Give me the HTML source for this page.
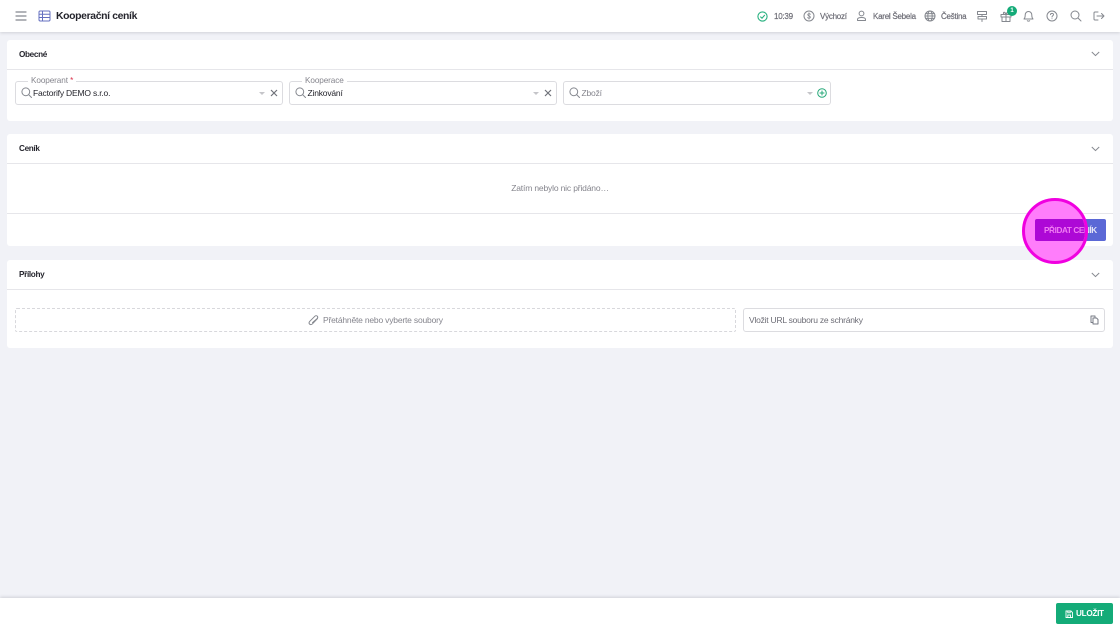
<!DOCTYPE html>
<html lang="cs"><head><meta charset="utf-8"><title>Kooperační ceník</title>
<style>
*{box-sizing:border-box}
html,body{margin:0;padding:0}
body{width:1120px;height:630px;position:relative;overflow:hidden;background:#f1f2f7;font-family:"Liberation Sans",sans-serif;color:#23232b}
.a{position:absolute}
.t{position:absolute;white-space:nowrap;line-height:14px}
.card{position:absolute;left:7px;width:1106px;background:#fff;border-radius:3px}
.line{position:absolute;left:0;right:0;height:1px;background:#e6e6ea}
.head{position:absolute;left:12px;font-size:8.2px;letter-spacing:-.35px;font-weight:bold;color:#26262e;line-height:12px}
.field{position:absolute;top:81px;height:24px;background:#fff;border:1px solid #dcdce0;border-radius:3px}
.lab{position:absolute;top:76px;font-size:8.2px;letter-spacing:-.1px;color:#85858d;background:#fff;padding:0 3px;line-height:10px}
svg{position:absolute;fill:none;overflow:visible}
.top{font-size:8px;letter-spacing:-.25px;color:#6d6d76;-webkit-text-stroke:.2px #6d6d76}
.ic{stroke:#85888f;stroke-width:1;stroke-linecap:round;stroke-linejoin:round}
.btxt{font-size:8.2px;letter-spacing:-.4px;font-weight:bold}
.b85{font-size:8.5px;letter-spacing:-.19px}
</style></head><body>

<div class="a" style="left:0;top:0;width:1120px;height:32px;background:#fff;box-shadow:0 1px 3px rgba(60,60,80,.18)"></div>
<svg style="left:15px;top:11px" width="12" height="10" class="ic"><path d="M1 1H11M1 5H11M1 9H11" stroke-width="1.2"/></svg>
<svg style="left:38px;top:10px" width="13" height="12" stroke="#6570c0" stroke-width="1"><rect x="1" y="1" width="11" height="10" rx="1.2"/><path d="M1 4.2H12M1 7.5H12M4.5 1V11"/></svg>
<div class="t" style="left:56px;top:10px;font-size:10.4px;letter-spacing:-.35px;font-weight:bold;color:#24242c">Kooperační ceník</div>

<svg style="left:757px;top:11px" width="11" height="11" stroke="#25b07e" stroke-width="1.1"><circle cx="5.5" cy="5.5" r="4.6"/><path d="M3.3 5.6L5 7.2L7.8 4"/></svg>
<div class="t top" style="left:774px;top:9.500px">10:39</div>
<svg style="left:803px;top:10px" width="12" height="12" class="ic"><circle cx="6" cy="6" r="5"/><path d="M7.500 4.300C7 3.500 5 3.400 4.700 4.600C4.500 6 7.600 5.800 7.400 7.400C7.100 8.600 5 8.500 4.500 7.600M6 2.800V9.200" stroke-width=".8"/></svg>
<div class="t top" style="left:820px;top:9.500px">Výchozí</div>
<svg style="left:856px;top:10px" width="11" height="12" class="ic" stroke-width=".9"><circle cx="5.500" cy="3.500" r="2.400"/><path d="M1.500 10.500V9.500C1.500 8 3 7.500 5.500 7.500S9.500 8 9.500 9.500V10.500Z"/></svg>
<div class="t top" style="left:873px;top:9.500px">Karel Šebela</div>
<svg style="left:924px;top:10px" width="12" height="12" class="ic" stroke-width=".9"><circle cx="6" cy="6" r="5"/><ellipse cx="6" cy="6" rx="2.200" ry="5"/><path d="M1 6H11M1.600 3.600H10.400M1.600 8.400H10.400"/></svg>
<div class="t top" style="left:941px;top:9.500px">Čeština</div>
<svg style="left:976px;top:10px" width="12" height="12" class="ic" stroke-width=".9"><path d="M1.500 1.500H10.500V4.500H1.500ZM2 6.500H10.500V9H2ZM6 4.500V6.500M6 9V11.500"/></svg>
<svg style="left:1000px;top:11px" width="12" height="11" class="ic" stroke-width=".9"><path d="M1 3.500H11V6H1ZM2 6V10.500H10V6M6 3.500V10.500M6 3.500C4 3.500 3 2.800 3.500 1.600C4.200.6 5.500 1.500 6 3.500C6.500 1.500 7.800.6 8.500 1.600C9 2.800 8 3.500 6 3.500"/></svg>
<div class="a" style="left:1007px;top:6px;width:10px;height:10px;border-radius:50%;background:#14ab78;color:#fff;font-size:6px;font-weight:bold;text-align:center;line-height:10px">1</div>
<svg style="left:1023px;top:10px" width="11" height="12" class="ic"><path d="M1 9H10C9 8 8.800 7 8.800 5C8.800 3 7.400 1.500 5.500 1.500S2.200 3 2.200 5C2.200 7 2 8 1 9ZM4.300 10.700C4.800 11.300 6.200 11.300 6.700 10.700"/></svg>
<svg style="left:1046px;top:10px" width="12" height="12" class="ic"><circle cx="6" cy="6" r="5"/><path d="M4.500 4.600C4.600 2.900 7.500 2.900 7.500 4.600C7.500 5.800 6 5.700 6 7M6 8.700V8.800"/></svg>
<svg style="left:1070px;top:10px" width="12" height="12" class="ic"><circle cx="5" cy="5" r="4"/><path d="M8 8L11 11"/></svg>
<svg style="left:1093px;top:11px" width="12" height="10" class="ic"><path d="M5 1H2C1.400 1 1 1.400 1 2V8C1 8.600 1.400 9 2 9H5M4 5H11M8.500 2.500L11 5L8.500 7.500"/></svg>

<div class="card" style="top:40px;height:81px">
 <div class="head" style="top:9px">Obecné</div><div class="line" style="top:29px"></div>
</div>
<svg style="left:1091px;top:51px" width="9" height="6" stroke="#85888f" stroke-width="1"><path d="M.8 1L4.500 4.600L8.200 1"/></svg>

<div class="field" style="left:15px;width:268px"></div>
<div class="lab" style="left:28px">Kooperant <span style="color:#d9304a">*</span></div>
<svg style="left:21px;top:87px" width="11" height="11" class="ic"><circle cx="4.800" cy="4.800" r="3.900"/><path d="M7.700 7.700L10.500 10.500"/></svg>
<div class="t b85" style="left:33px;top:86px;color:#24242c">Factorify DEMO s.r.o.</div>
<div class="a" style="left:259px;top:92px;border:3px solid transparent;border-top:3px solid #c5c5c9;border-bottom:0"></div>
<svg style="left:270px;top:89px" width="8" height="8" stroke="#6f727a" stroke-width="1.200"><path d="M1 1L7 7M7 1L1 7"/></svg>

<div class="field" style="left:289px;width:268px"></div>
<div class="lab" style="left:302px">Kooperace</div>
<svg style="left:295px;top:87px" width="11" height="11" class="ic"><circle cx="4.800" cy="4.800" r="3.900"/><path d="M7.700 7.700L10.500 10.500"/></svg>
<div class="t b85" style="left:307.500px;top:86px;color:#24242c">Zinkování</div>
<div class="a" style="left:533px;top:92px;border:3px solid transparent;border-top:3px solid #c5c5c9;border-bottom:0"></div>
<svg style="left:544px;top:89px" width="8" height="8" stroke="#6f727a" stroke-width="1.200"><path d="M1 1L7 7M7 1L1 7"/></svg>

<div class="field" style="left:563px;width:268px"></div>
<svg style="left:569px;top:87px" width="11" height="11" class="ic"><circle cx="4.800" cy="4.800" r="3.900"/><path d="M7.700 7.700L10.500 10.500"/></svg>
<div class="t b85" style="left:581.500px;top:86px;color:#85858d">Zboží</div>
<div class="a" style="left:807px;top:92px;border:3px solid transparent;border-top:3px solid #c5c5c9;border-bottom:0"></div>
<svg style="left:817px;top:88px" width="10" height="10" stroke="#25a878" stroke-width="1"><circle cx="5" cy="5" r="4.300"/><path d="M5 2.600V7.400M2.600 5H7.400"/></svg>

<div class="card" style="top:134px;height:112px">
 <div class="head" style="top:9px">Ceník</div><div class="line" style="top:29px"></div><div class="line" style="top:79px"></div>
</div>
<svg style="left:1091px;top:146px" width="9" height="6" stroke="#85888f" stroke-width="1"><path d="M.8 1L4.500 4.600L8.200 1"/></svg>
<div class="t b85" style="left:0;width:1120px;text-align:center;top:181px;letter-spacing:-.16px;color:#85858d">Zatím nebylo nic přidáno…</div>

<div class="card" style="top:260px;height:88px">
 <div class="head" style="top:9px">Přílohy</div><div class="line" style="top:29px"></div>
</div>
<svg style="left:1091px;top:272px" width="9" height="6" stroke="#85888f" stroke-width="1"><path d="M.8 1L4.500 4.600L8.200 1"/></svg>
<div class="a" style="left:15px;top:308px;width:721px;height:24px;border:1px dashed #d8d8dc;border-radius:2px"></div>
<svg style="left:308px;top:315px" width="11" height="11" class="ic" stroke-width="1"><path d="M9.500 3.500L4.500 8.800C3.500 9.800 2.200 9.800 1.500 9C.8 8.200 1 7.200 1.800 6.300L6.800 1.300C7.600.5 8.700.6 9.300 1.200C9.900 1.900 9.800 2.900 9.100 3.600L4.500 7.600"/></svg>
<div class="t b85" style="left:323px;top:313px;color:#85858d">Přetáhněte nebo vyberte soubory</div>
<div class="field" style="left:743px;top:308px;width:362px"></div>
<div class="t b85" style="left:749px;top:313px;letter-spacing:-.23px;color:#6d6d76">Vložit URL souboru ze schránky</div>
<svg style="left:1090px;top:315px" width="9" height="10" stroke="#777b85" stroke-width="1" stroke-linejoin="round"><path d="M2.500 7.500H1V1H5V2.500"/><path d="M3 3H6.500L8 4.500V9H3Z"/></svg>

<div class="a" style="left:0;top:598px;width:1120px;height:32px;background:#fff;box-shadow:0 -1px 3px rgba(60,60,80,.18)"></div>
<div class="a" style="left:1056px;top:603px;width:57px;height:21px;background:#14ab78;border-radius:2px"></div>
<svg style="left:1065px;top:610px" width="8" height="8" stroke="#fff" stroke-width=".9"><path d="M1 1H6L7.500 2.500V7.500H1ZM2.800 7.500V5H5.500V7.500M2.800 1V2.800H5.200V1"/></svg>
<div class="t btxt" style="left:1076px;top:607px;letter-spacing:-.3px;color:#fff">ULOŽIT</div>

<div class="a" style="left:1035px;top:219px;width:71px;height:22px;background:#5b68d6;border-radius:2px"></div>
<div class="t btxt" style="left:1044px;top:224px;color:#e6e6f6">PŘIDAT CENÍK</div>
<div class="a" style="left:1022px;top:198px;width:66px;height:66px;border-radius:50%;background:#ff7dfb;border:3px solid #f000e0;overflow:hidden">
 <div class="a" style="left:10px;top:18px;width:71px;height:22px;background:#ad08d6;border-radius:2px"></div>
 <div class="t btxt" style="left:19px;top:23px;color:#f07cf2">PŘIDAT CENÍK</div>
</div>
</body></html>
